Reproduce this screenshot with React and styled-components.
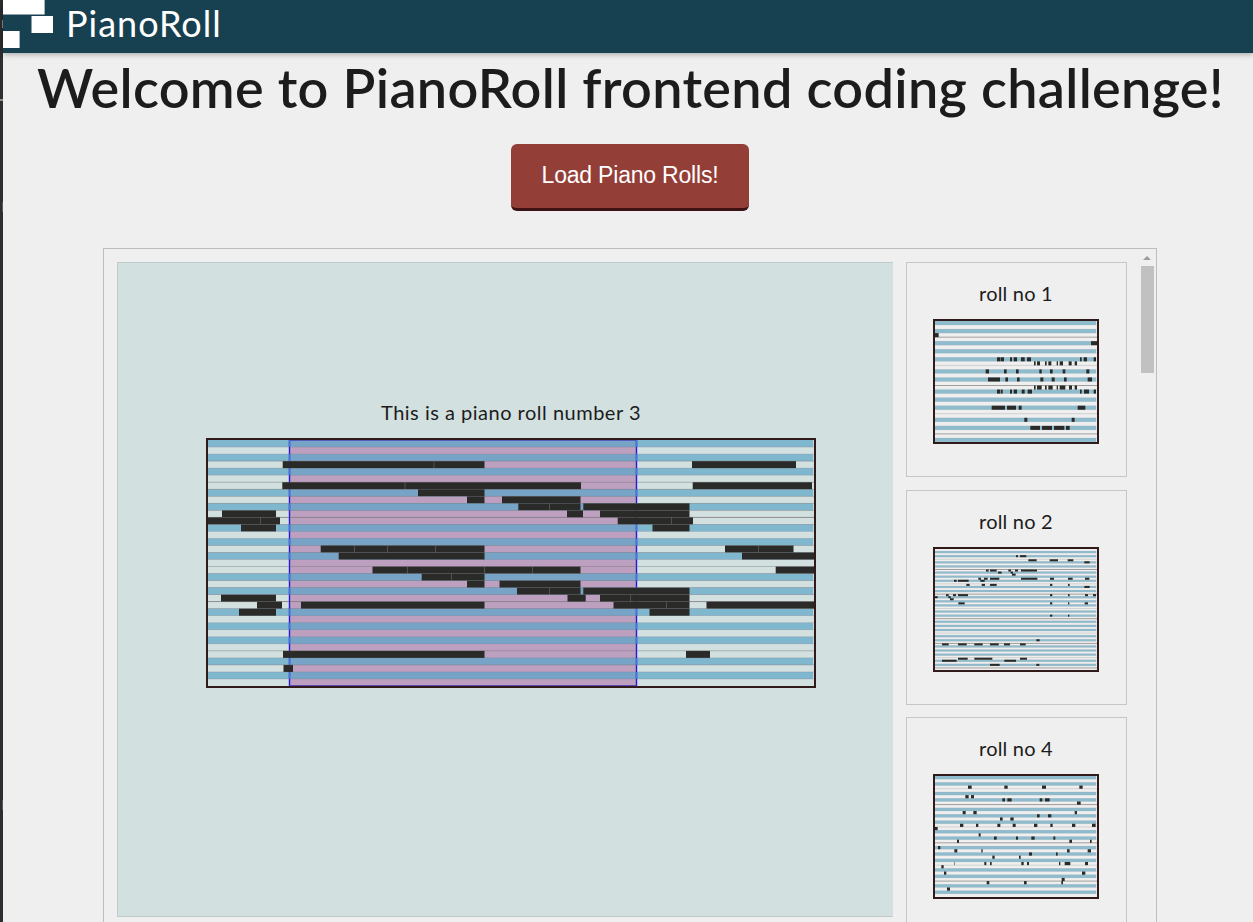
import React from "react";
import styled, { createGlobalStyle } from "styled-components";

const GlobalStyle = createGlobalStyle`
  * { box-sizing: border-box; }
  html, body { margin: 0; padding: 0; height: 100%; overflow: hidden; }
  body { background: #efefef; color: #1c1c1c; font-family: Lato, "Open Sans", sans-serif; }
`;

const Page = styled.div`
  height: 922px;
  overflow: hidden;
  display: flex;
  background: #efefef;
`;

const Edge = styled.div`
  flex: 0 0 3px;
  padding-top: 20px;
  background: #2d2e31;
`;

const EdgeMark = styled.div`
  width: ${(p) => p.$w}px;
  height: ${(p) => p.$h}px;
  margin-left: ${(p) => 3 - p.$w}px;
  margin-bottom: ${(p) => p.$gap}px;
  background: ${(p) => p.$color};
`;

const Content = styled.div`
  flex: 1;
  min-width: 0;
  display: flex;
  flex-direction: column;
`;

const Header = styled.header`
  flex: 0 0 53px;
  display: flex;
  align-items: flex-start;
  background: #174150;
  box-shadow: 0 1px 6px rgba(0, 0, 0, 0.35);
`;

const Logo = styled.svg`
  flex: none;
  display: block;
  width: 51px;
  height: 50px;
`;

const Brand = styled.span`
  margin: 2px 0 0 12px;
  font-size: 36px;
  line-height: 43px;
  letter-spacing: 1px;
  color: #fff;
  white-space: nowrap;
`;

const Title = styled.h1`
  flex: none;
  margin: 2px 0 0;
  padding-left: 34px;
  height: 66px;
  font-size: 54px;
  line-height: 65px;
  font-weight: 600;
  letter-spacing: 0.32px;
  color: #1c1c1c;
  white-space: nowrap;
`;

const LoadButton = styled.button`
  align-self: center;
  flex: none;
  width: 238px;
  height: 67px;
  margin: 23px 0 37px 4px;
  padding: 0 0 2px;
  border: 0;
  border-bottom: 3px solid #3c1214;
  border-radius: 6px;
  background: #943e38;
  color: #fff;
  font-family: "Liberation Sans", Arial, sans-serif;
  font-size: 23px;
  letter-spacing: -0.2px;
`;

const Viewer = styled.main`
  flex: none;
  display: flex;
  width: 1054px;
  height: 720px;
  margin-left: 100px;
  padding: 13px 2px 0 13px;
  border: 1px solid #bdbdbd;
`;

const Stage = styled.section`
  flex: none;
  width: 776px;
  height: 655px;
  padding: 137px 0 0 88px;
  background: #d3e0e0;
  border: 1px solid #c2cbcb;
  border-right: 0;
`;

const Caption = styled.p`
  width: ${(p) => p.$w}px;
  margin: 0;
  height: ${(p) => p.$h}px;
  font-size: 20px;
  line-height: 24px;
  letter-spacing: ${(p) => p.$spacing}px;
  text-align: center;
  white-space: nowrap;
`;

const RollFrame = styled.div`
  width: ${(p) => p.$w}px;
  height: ${(p) => p.$h}px;
  border: 2px solid #301a1a;
  svg { display: block; }
`;

const Cards = styled.aside`
  flex: none;
  display: flex;
  flex-direction: column;
  gap: 12.4px;
  width: 221px;
  margin-left: 13px;
`;

const Card = styled.article`
  flex: none;
  height: 215.2px;
  padding: 18.2px 0 0 26px;
  border: 1px solid #c6c6c6;
`;

const Scrollbar = styled.div`
  flex: none;
  width: 13px;
  margin: -6px 0 0 14px;
`;

const ScrollArrow = styled.div`
  width: 0;
  margin: 0 0 6px 2px;
  border: 4.5px solid transparent;
  border-top: 0;
  border-bottom: 4px solid #9b9b9b;
`;

const ScrollThumb = styled.div`
  height: 107px;
  background: #c1c1c1;
`;

const BLACK_KEYS = [1, 3, 5, 8, 10];
const pitch = (row, c) => (((row - c) % 12) + 12) % 12;

// Every entry is [row, start, end, start, end, ...]
const MAIN_NOTES = [
  [3, 282.7, 484.5, 692, 796], [6, 282.3, 581, 692.7, 812], [7, 418, 484.5],
  [8, 467, 484.5, 502, 580.5], [9, 518.3, 580.5, 583.3, 689.5],
  [10, 222, 276, 567, 583, 600, 689.5], [11, 208, 280, 617.7, 693],
  [12, 241, 276, 652.5, 689.5], [15, 320.7, 484.5, 725, 793.5],
  [16, 338.7, 484.5, 742, 814], [18, 372.5, 580.5, 775.7, 814], [19, 421.7, 484.5],
  [20, 467, 484.5, 499.5, 580.5], [21, 517, 580.5, 583.3, 689.5],
  [22, 221, 276, 567.5, 585.7, 600, 689.5],
  [23, 257, 282, 301, 484.5, 613.5, 689.5, 706.5, 814], [24, 239, 276, 649.5, 689.5],
  [30, 283, 484.5, 686, 710], [32, 283.5, 293],
];
const MAIN_TICKS = [
  [3, 434], [6, 405], [9, 549.5], [11, 260.5, 671.5],
  [15, 354.5, 387.5, 435.5, 758.5], [18, 407.5, 484.5, 532.5], [19, 451.5],
  [21, 549.5], [22, 630.5], [23, 666.5],
];

const ROLL_1 = [
  [3, 30, 41], [5, 498, 516],
  [9, 216, 226.5, 228, 237, 255, 261, 266, 276, 288, 299, 306, 318, 465, 470, 476, 486, 506, 513],
  [10, 327, 332, 336, 345, 360, 365, 370, 379, 395, 399, 404, 414, 431, 440, 449, 456],
  [12, 182, 192, 237, 245, 273, 281, 343, 350, 375, 383, 413, 421, 484, 493],
  [14, 189, 225, 241, 249, 276, 284, 346, 355, 380, 389, 417, 425, 488, 501],
  [16, 327, 332, 336, 350, 360, 365, 370, 383, 395, 399, 404, 421, 432, 441, 449, 456],
  [17, 216, 226, 228, 233, 255, 261, 266, 276, 290, 299, 308, 321, 465, 470, 477, 492, 506, 513],
  [21, 200, 240, 246, 273, 281, 290, 458, 481], [24, 298, 307, 440, 449],
  [26, 316, 345, 351, 381, 387, 418, 423, 434],
];
const ROLL_2 = [
  [3, 273, 279, 285, 304], [5, 310, 335, 374, 399, 428, 445], [6, 478, 494],
  [10, 183, 191, 195, 215, 250, 258, 270, 279, 288, 336], [11, 219, 230, 257, 264],
  [12, 261, 272], [14, 160, 168, 177, 188, 195, 223, 288, 337, 375, 387, 429, 443, 480, 493],
  [15, 87, 95, 99, 131, 166, 179], [17, 124, 134, 170, 180, 195, 215, 375, 382, 429, 434],
  [18, 478, 494], [22, 63, 71, 84, 93, 99, 129, 375, 382, 429, 434, 480, 489, 504, 513],
  [23, 30, 38, 70, 77], [24, 75, 86], [26, 100, 119, 375, 382, 429, 433, 479, 489],
  [32, 375, 382, 429, 433], [44, 334, 344],
  [46, 51, 71, 99, 125, 148, 173, 195, 221, 237, 255, 285, 302],
  [53, 99, 128, 148, 202, 285, 306], [54, 51, 95, 238, 273], [56, 195, 224, 334, 343],
];
const ROLL_4 = [
  [3, 129, 140, 238, 248, 351, 363, 463, 473], [6, 121, 131, 138, 147],
  [7, 232, 240, 247, 260, 344, 352, 360, 374], [8, 456, 467],
  [11, 113, 122, 145, 155, 449, 456], [12, 336, 344, 369, 379], [13, 225, 233, 256, 266],
  [15, 105, 115, 153, 160, 217, 226, 263, 272, 327, 337, 376, 383, 441, 451, 501, 512],
  [16, 30, 38], [18, 161, 167], [19, 207, 215, 273, 279, 319, 329, 385, 391],
  [20, 96, 102, 433, 441, 495, 500], [22, 39, 46],
  [23, 88, 97, 169, 173, 426, 434, 488, 498], [24, 312, 321, 393, 398],
  [25, 202, 209, 282, 287],
  [27, 87, 88.5, 178, 184, 195, 200, 289, 296, 306, 312, 402, 406, 419, 436, 480, 489],
  [28, 49, 56], [30, 57, 64, 471, 481], [32, 410, 419],
  [33, 185, 193, 297, 305, 409, 414], [35, 66, 75],
];

const CARDS = [
  { label: "roll no 1", rows: 30, c: 4, notes: ROLL_1 },
  { label: "roll no 2", rows: 59, c: 10, notes: ROLL_2 },
  { label: "roll no 4", rows: 38, c: 9, notes: ROLL_4 },
];

function Roll({ w, h, rows, c, notes, ticks = [], origin, unit, selection, blue, octave, line }) {
  const rh = h / rows;
  const px = (x) => (x - origin) / unit;
  const all = Array.from({ length: rows }, (_, i) => i);
  const black = all.filter((i) => BLACK_KEYS.includes(pitch(i, c)));
  return (
    <svg width={w} height={h} viewBox={`0 0 ${w} ${h}`}>
      {selection && (
        <rect x={selection[0]} width={selection[1] - selection[0]} height={h} fill="#bda0c0" />
      )}
      {black.map((i) => (
        <rect key={i} y={i * rh} width={w - 0.8} height={rh} fill={blue} />
      ))}
      {selection && black.map((i) => (
        <rect key={i} x={selection[0]} y={i * rh} width={selection[1] - selection[0]} height={rh} fill="#77a4c6" />
      ))}
      {all.slice(1).map((i) => {
        const p = pitch(i, c);
        if (p === 0) return <rect key={i} y={i * rh - 0.4} width={w} height="0.8" fill={octave} />;
        if (p === 7) return <rect key={i} y={i * rh - 0.4} width={w} height="0.8" fill="#777" opacity="0.3" />;
        return <rect key={i} y={i * rh - 0.3} width={w} height="0.6" fill="#806878" opacity={line} />;
      })}
      {selection && (
        <g fill="none">
          <path d={`M${selection[0] + 0.5} 0V${h}M${selection[1] - 0.5} 0V${h}`} stroke="#2418d8" strokeWidth="1.4" />
          <path d={`M${selection[0]} ${h - 0.5}H${selection[1]}M${selection[0]} 0.3H${selection[1]}`} stroke="#4632b8" strokeWidth="0.8" />
          {black.map((i) => (
            <path
              key={i}
              d={`M${selection[0] + 0.5} ${i * rh}v${rh}M${selection[1] - 0.5} ${i * rh}v${rh}`}
              stroke="#4474dc"
              strokeWidth="1.4"
            />
          ))}
        </g>
      )}
      {notes.map(([row, ...xs]) =>
        xs.map((x, k) =>
          k % 2 ? null : (
            <rect key={`${row}-${k}`} x={px(x)} y={row * rh} width={px(xs[k + 1]) - px(x)} height={rh} fill="#2a2b29" />
          )
        )
      )}
      {ticks.map(([row, ...xs]) =>
        xs.map((x) => (
          <rect key={`${row}-${x}`} x={px(x) - 0.5} y={row * rh} width="1" height={rh} fill="#777" opacity="0.5" />
        ))
      )}
      {selection && notes.map(([row]) => (
        <rect key={row} y={row * rh - 0.25} width={w} height="0.5" fill="#777" opacity="0.45" />
      ))}
    </svg>
  );
}

export default function App() {
  return (
    <Page>
      <GlobalStyle />
      <Edge>
        <EdgeMark $w={1} $h={8} $gap={71} $color="#8d8d8d" />
        <EdgeMark $w={3} $h={2} $gap={101} $color="#8d8d8d" />
        <EdgeMark $w={1} $h={10} $gap={588} $color="#56575a" />
        <EdgeMark $w={1} $h={10} $gap={80} $color="#56575a" />
      </Edge>
      <Content>
        <Header>
          <Logo viewBox="0 0 51 50" fill="#fff">
            <rect width="41.6" height="14.5" />
            <rect x="28.5" y="16" width="21.5" height="17" />
            <rect y="31" width="16.6" height="17" />
          </Logo>
          <Brand>PianoRoll</Brand>
        </Header>
        <Title>Welcome to PianoRoll frontend coding challenge!</Title>
        <LoadButton>Load Piano Rolls!</LoadButton>
        <Viewer>
          <Stage>
            <Caption $w={610} $h={38} $spacing={0.5}>This is a piano roll number 3</Caption>
            <RollFrame $w={610} $h={250}>
              <Roll
                w={606} h={246} rows={35} c={11} notes={MAIN_NOTES} ticks={MAIN_TICKS}
                origin={208} unit={1} selection={[81, 429]} blue="#7fb8ce" octave="#888088" line={0.35}
              />
            </RollFrame>
          </Stage>
          <Cards>
            {CARDS.map((card) => (
              <Card key={card.label}>
                <Caption $w={166} $h={38} $spacing={0.2}>{card.label}</Caption>
                <RollFrame $w={166} $h={125}>
                  <Roll
                    w={162} h={121} rows={card.rows} c={card.c} notes={card.notes}
                    origin={30} unit={3} blue="#8fbccd" octave="#8f8a8a" line={0.12}
                  />
                </RollFrame>
              </Card>
            ))}
          </Cards>
          <Scrollbar>
            <ScrollArrow />
            <ScrollThumb />
          </Scrollbar>
        </Viewer>
      </Content>
    </Page>
  );
}
